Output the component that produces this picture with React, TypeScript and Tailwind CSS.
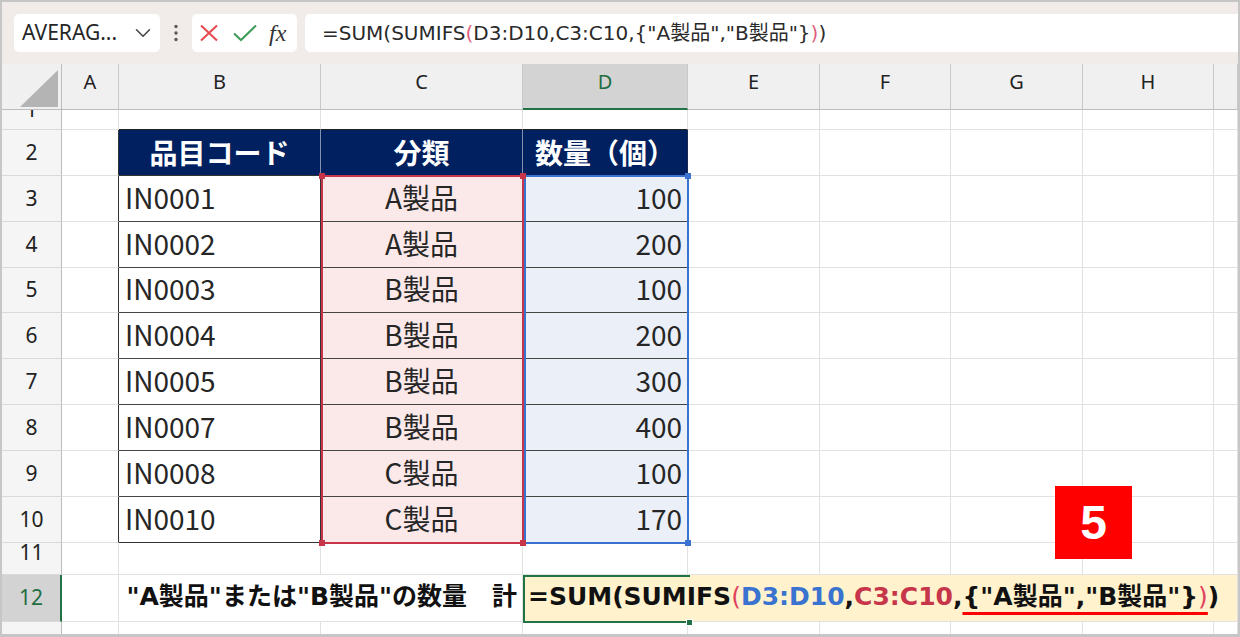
import type { ReactNode } from "react";
import { ChevronDown } from "lucide-react";
import { twMerge } from "tailwind-merge";

const COLS = "grid grid-cols-[60px_57px_202px_202px_165px_132px_131px_132px_131px_1fr]";
const JP = "font-['Noto_Sans_CJK_JP',sans-serif]";
const WIDE = "font-['DejaVu_Sans','Noto_Sans_CJK_JP',sans-serif]";
const UI = "font-['Noto_Sans','Noto_Sans_CJK_JP',sans-serif]";

const items = [
  { code: "IN0001", kind: "A製品", qty: 100, h: "h-[46px]" },
  { code: "IN0002", kind: "A製品", qty: 200, h: "h-[46px]" },
  { code: "IN0003", kind: "B製品", qty: 100, h: "h-[45px]" },
  { code: "IN0004", kind: "B製品", qty: 200, h: "h-[46px]" },
  { code: "IN0005", kind: "B製品", qty: 300, h: "h-[46px]" },
  { code: "IN0007", kind: "B製品", qty: 400, h: "h-[46px]" },
  { code: "IN0008", kind: "C製品", qty: 100, h: "h-[46px]" },
  { code: "IN0010", kind: "C製品", qty: 170, h: "h-[46px]" },
];

function Cell({ className, children }: { className?: string; children?: ReactNode }) {
  return (
    <div
      className={twMerge(
        "flex min-w-0 items-center overflow-hidden whitespace-nowrap border-r border-b border-r-[#e1e1e1] border-b-[#e1e1e1]",
        className
      )}
    >
      {children}
    </div>
  );
}

function RowHead({ className, children }: { className?: string; children?: ReactNode }) {
  return (
    <Cell
      className={twMerge(
        "justify-center bg-[#f5f5f5] border-r-[#bcbcbc] border-b-[#d9d9d9] font-['Noto_Sans',sans-serif] text-[21px] text-[#222]",
        className
      )}
    >
      {children}
    </Cell>
  );
}

// empty cells E..I
function Tail() {
  return (
    <>
      <Cell />
      <Cell />
      <Cell />
      <Cell />
      <Cell />
    </>
  );
}

function Toolbar() {
  return (
    <div className="flex h-[62px] items-center bg-[#f1ebe9] pl-[12px]">
      <div className="flex h-[38px] w-[146px] items-center justify-between rounded-[5px] bg-white pl-[8px] pr-[4px]">
        <span className={`${UI} text-[21px] text-[#262626]`}>AVERAG...</span>
        <ChevronDown size={26} strokeWidth={1.4} className="text-[#444]" />
      </div>
      <div className="flex w-[32px] justify-center">
        <svg width="6" height="18" viewBox="0 0 6 18">
          <circle cx="3" cy="2.5" r="1.7" fill="#5a5a5a" />
          <circle cx="3" cy="9" r="1.7" fill="#5a5a5a" />
          <circle cx="3" cy="15.5" r="1.7" fill="#5a5a5a" />
        </svg>
      </div>
      <div className="flex h-[38px] w-[105px] items-center rounded-[5px] bg-white pl-[7px]">
        <svg width="20" height="18" viewBox="0 0 20 18">
          <path d="M2 1.5 L18 16.5 M18 1.5 L2 16.5" stroke="#e5484d" strokeWidth="2" fill="none" />
        </svg>
        <svg width="26" height="18" viewBox="0 0 26 18" className="ml-[13px]">
          <path d="M2 9.5 L9 16 L24 1.5" stroke="#3e9c58" strokeWidth="2" fill="none" />
        </svg>
        <span className="ml-[11px] font-['Liberation_Serif',serif] text-[24px] italic leading-none text-[#333]">fx</span>
      </div>
      <div className={`ml-[8px] flex h-[38px] flex-1 items-center rounded-l-[5px] bg-white pl-[17px] ${WIDE} text-[20px] text-[#2a2a2a]`}>
        <span>=SUM(SUMIFS</span>
        <span className="text-[#e0607e]">(</span>
        <span>D3:D10,C3:C10,{'{"A製品","B製品"}'}</span>
        <span className="text-[#e0607e]">)</span>
        <span>)</span>
      </div>
    </div>
  );
}

function HeaderRow() {
  const letters = ["A", "B", "C", "D", "E", "F", "G", "H", ""];
  return (
    <div className={`${COLS} h-[46px]`}>
      <div className="flex items-end justify-end border-r border-b border-r-[#bcbcbc] border-b-[#bcbcbc] bg-[#f0f0f0] pr-[3px] pb-[2px]">
        <svg width="38" height="37" viewBox="0 0 38 37">
          <polygon points="38,0 38,37 0,37" fill="#b4b4b4" />
        </svg>
      </div>
      {letters.map((l, i) =>
        l === "D" ? (
          <Cell
            key={i}
            className="justify-center bg-[#d3d3d3] border-r-[#c8c8c8] border-b-2 border-b-[#217346] pb-[8px] font-['Noto_Sans',sans-serif] text-[20px] text-[#1e6e42]"
          >
            {l}
          </Cell>
        ) : (
          <Cell
            key={i}
            className="justify-center bg-[#f0f0f0] border-r-[#c8c8c8] border-b-[#bcbcbc] pb-[9px] font-['Noto_Sans',sans-serif] text-[20px] text-[#222]"
          >
            {l}
          </Cell>
        )
      )}
    </div>
  );
}

export default function App() {
  return (
    <div
      className={`h-[637px] w-[1240px] overflow-hidden border-t-2 border-l-2 border-r-2 border-b-[3px] border-[#c6c6c6] bg-white ${JP}`}
    >
      <Toolbar />
      <div className="relative">
        <HeaderRow />

        {/* row 1 */}
        <div className={`${COLS} h-[20px]`}>
          <RowHead className="items-start">
            <span className="-mt-[11px] leading-none">1</span>
          </RowHead>
          <Cell />
          <Cell className="border-b-[#222]" />
          <Cell className="border-b-[#222]" />
          <Cell className="border-b-[#222]" />
          <Tail />
        </div>

        {/* row 2: table header */}
        <div className={`${COLS} h-[46px]`}>
          <RowHead>2</RowHead>
          <Cell className="border-r-[#333]" />
          <Cell className="justify-center bg-[#002060] border-r-[#8391ad] border-b-[#333] pb-[2px] text-[28px] font-bold text-white">
            品目コード
          </Cell>
          <Cell className="justify-center bg-[#002060] border-r-[#8391ad] border-b-[#333] pb-[2px] text-[28px] font-bold text-white">
            分類
          </Cell>
          <Cell className="justify-center bg-[#002060] border-r-[#1a2a50] border-b-[#333] pb-[2px] text-[28px] font-bold text-white">
            数量（個）
          </Cell>
          <Tail />
        </div>

        {items.map((it, i) => {
          const last = i === items.length - 1;
          const line = last ? "border-b-[#333]" : "border-b-[#454545]";
          return (
            <div key={it.code} className={`${COLS} ${it.h}`}>
              <RowHead>{i + 3}</RowHead>
              <Cell className="border-r-[#333]" />
              <Cell className={`border-r-[#333] ${line} pl-[6px] pb-[4px] text-[28px] text-[#262626]`}>{it.code}</Cell>
              <Cell className={`justify-center bg-[#fbe9ea] ${line} pb-[4px] text-[28px] text-[#262626]`}>{it.kind}</Cell>
              <Cell className={`justify-end bg-[#eaeff8] border-r-[#333] ${line} pr-[5px] pb-[4px] text-[28px] text-[#262626]`}>
                {it.qty}
              </Cell>
              <Tail />
            </div>
          );
        })}

        {/* row 11 */}
        <div className={`${COLS} h-[32px]`}>
          <RowHead className="items-start">
            <span className="-mt-[1px] leading-none">11</span>
          </RowHead>
          <Cell />
          <Cell />
          <Cell />
          <Cell />
          <Tail />
        </div>

        {/* row 12 */}
        <div className={`${COLS} h-[47px]`}>
          <RowHead className="bg-[#d3d3d3] border-r-2 border-r-[#217346] text-[#1e6e42]">12</RowHead>
          <Cell />
          <Cell className={`col-span-2 justify-end pr-[5px] pb-[3px] ${WIDE} text-[25px] font-bold text-[#111]`}>
            "A製品"または"B製品"の数量　計
          </Cell>
          <Cell className={`col-span-6 bg-[#fff2cc] pl-[5px] pb-[3px] ${WIDE} text-[25px] font-bold text-[#111]`}>
            <span>=SUM(SUMIFS</span>
            <span className="font-normal text-[#e0435f]">(</span>
            <span className="text-[#3a72d0]">D3:D10</span>
            <span>,</span>
            <span className="text-[#c7354a]">C3:C10</span>
            <span>,</span>
            <span className="underline decoration-[#ff0000] decoration-[3px] underline-offset-[7px] [text-decoration-skip-ink:none]">
              {'{"A製品","B製品"}'}
              <span className="font-normal text-[#e0435f]">)</span>
            </span>
            <span>)</span>
          </Cell>
        </div>

        {/* row 13 */}
        <div className={`${COLS} h-[20px]`}>
          <RowHead />
          <Cell />
          <Cell />
          <Cell />
          <Cell />
          <Tail />
        </div>

        {/* range highlight D3:D10 */}
        <div className="absolute left-[522px] top-[111px] h-[369px] w-[165px] border-2 border-[#3a72d0]">
          <div className="absolute -right-[4px] -top-[4px] h-[6px] w-[6px] bg-[#3a72d0]" />
          <div className="absolute -bottom-[4px] -right-[4px] h-[6px] w-[6px] bg-[#3a72d0]" />
        </div>

        {/* range highlight C3:C10 */}
        <div className="absolute left-[319px] top-[111px] h-[369px] w-[203px] border-2 border-[#c7354a]">
          <div className="absolute -left-[4px] -top-[4px] h-[6px] w-[6px] bg-[#c7354a]" />
          <div className="absolute -right-[4px] -top-[4px] h-[6px] w-[6px] bg-[#c7354a]" />
          <div className="absolute -bottom-[4px] -left-[4px] h-[6px] w-[6px] bg-[#c7354a]" />
          <div className="absolute -bottom-[4px] -right-[4px] h-[6px] w-[6px] bg-[#c7354a]" />
        </div>

        {/* active cell D12: open on the right while editing */}
        <div className="absolute left-[521px] top-[511px] h-[48px] w-[167px] border-2 border-r-0 border-[#217346]">
          <div className="absolute -bottom-[5px] -right-[3px] h-[7px] w-[7px] border border-white bg-[#217346]" />
        </div>

        {/* step badge */}
        <div className="absolute left-[1053px] top-[422px] flex h-[73px] w-[77px] items-center justify-center bg-[#ff0000] font-['Liberation_Sans',sans-serif] text-[48px] font-bold text-white">
          5
        </div>
      </div>
    </div>
  );
}
